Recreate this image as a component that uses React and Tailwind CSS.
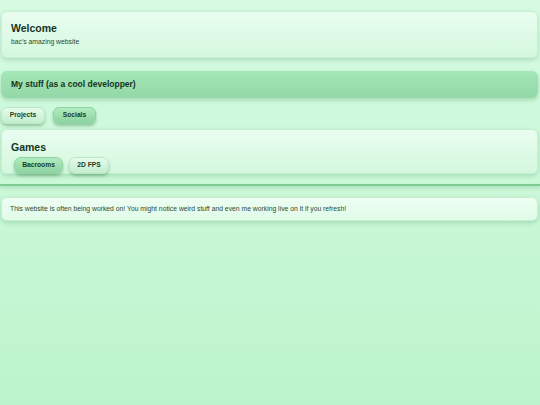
export default function App() {
  const font = { fontFamily: '"Liberation Sans", Arial, sans-serif' };
  const card =
    'rounded-[6px] border border-[#c8eed3] bg-gradient-to-b from-[#eafdf0] to-[#d3f8de] shadow-[0_2px_4px_rgba(60,140,80,0.25)]';
  const lightBtn =
    'rounded-[6px] border border-[#bfe8c9] bg-gradient-to-b from-[#e6fcec] to-[#c2eecd] shadow-[0_2px_3px_rgba(50,120,70,0.4)] font-bold text-[6.7px] text-[#1d3b24] h-[17px] flex items-center';
  const darkBtn =
    'rounded-[6px] border border-[#8fd3a1] bg-gradient-to-b from-[#b0ecbf] to-[#8cd2a0] shadow-[0_2px_3px_rgba(50,120,70,0.4)] font-bold text-[6.7px] text-[#1d3b24] h-[17px] flex items-center';

  return (
    <div
      className="min-h-[405px] w-full bg-gradient-to-b from-[#d6fbe2] to-[#bcf4cc] text-[#1d3b24] pl-0 pr-[2px] pt-[11px]"
      style={font}
    >
      {/* Welcome */}
      <div className={`${card} ml-px h-[47px] px-[9px] pt-[11px]`}>
        <h1 className="text-[10.5px] font-bold leading-none text-[#16331d]">Welcome</h1>
        <p className="text-[6.8px] mt-[5px] leading-none text-[#2b4a32]">bac's amazing website</p>
      </div>

      {/* Section bar */}
      <div className="ml-px mt-[13px] h-[27px] rounded-[6px] bg-gradient-to-b from-[#a5e7b6] to-[#93d8a7] shadow-[0_2px_4px_rgba(60,140,80,0.3)] flex items-center px-[10px]">
        <span className="text-[8.5px] font-bold text-[#16331d]">My stuff (as a cool developper)</span>
      </div>

      {/* Tabs */}
      <div className="ml-px mt-[9px] flex gap-[8px]">
        <button className={`${lightBtn} w-[44px] justify-center`}>Projects</button>
        <button className={`${darkBtn} w-[43px] justify-center`}>Socials</button>
      </div>

      {/* Games */}
      <div className={`${card} ml-px mt-[5px] h-[45px] px-[9px] pt-[12px]`}>
        <h2 className="text-[10.5px] font-bold leading-none text-[#16331d]">Games</h2>
        <div className="mt-[4px] ml-[3px] flex gap-[6px]">
          <button className={`${darkBtn} h-[15px] w-[49px] justify-center rounded-[7px]`}>Bacrooms</button>
          <button className={`${lightBtn} h-[15px] w-[40px] justify-center rounded-[7px]`}>2D FPS</button>
        </div>
      </div>

      <hr className="mt-[10px] -mr-[2px] border-0 h-[2px] bg-[#7fca93] shadow-[0_2px_3px_rgba(80,170,110,0.35)]" />

      {/* Notice */}
      <div className={`${card} ml-px mt-[11px] h-[24px] flex items-center px-[8px] from-[#eefef3] to-[#e0fbe8]`}>
        <p className="text-[6.8px] text-[#2b4a32]">
          This website is often being worked on! You might notice weird stuff and even me working live on it if you refresh!
        </p>
      </div>
    </div>
  );
}
